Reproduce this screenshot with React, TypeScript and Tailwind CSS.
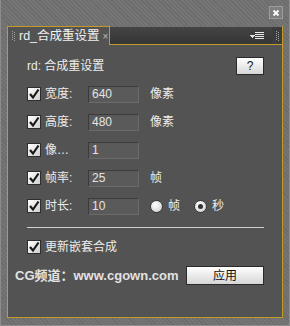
import React from "react";

const font = "font-['Liberation_Sans','Noto_Sans_CJK_SC',sans-serif]";

const Check: React.FC = () => (
  <div className="w-[14px] h-[14px] shrink-0 border border-[#2e2e2e] bg-[linear-gradient(135deg,#ffffff,#cfcfcf)] flex items-center justify-center">
    <svg width="12" height="12" viewBox="0 0 12 12">
      <path d="M2 6 L5 9.5 L10.5 1.5" fill="none" stroke="#1a1a1a" strokeWidth="2.2" />
    </svg>
  </div>
);

const Radio: React.FC<{ on?: boolean }> = ({ on }) => (
  <div className="w-[13px] h-[13px] rounded-full border border-[#3a3a3a] bg-[radial-gradient(circle_at_40%_35%,#ffffff,#c8c8c8)] flex items-center justify-center">
    {on && <div className="w-[5px] h-[5px] rounded-full bg-[#333]" />}
  </div>
);

const Field: React.FC<{ label: string; value: string; unit?: React.ReactNode }> = ({ label, value, unit }) => (
  <div className="h-[28px] flex items-center">
    <Check />
    <span className="ml-[4px] w-[43px] text-[12px] text-[#ececec]">{label}</span>
    <div className="w-[51px] h-[17px] border border-[#3b3b3b] border-r-[#6a6a6a] border-b-[#6a6a6a] bg-[#5a5a5a] pl-[3px] text-[12px] leading-[15px] text-[#e4e4e4]">
      {value}
    </div>
    <div className="ml-[11px] flex items-center text-[12px] text-[#ececec]">{unit}</div>
  </div>
);

const Grip: React.FC = () => (
  <svg width="3" height="10" viewBox="0 0 3 10">
    {[0, 2, 4, 6, 8].map((y) => (
      <React.Fragment key={y}>
        <rect x="0" y={y} width="1" height="1" fill="#a0a0a0" />
        <rect x="2" y={y + 1} width="1" height="1" fill="#a0a0a0" />
      </React.Fragment>
    ))}
  </svg>
);

const Btn: React.FC<{ children: React.ReactNode; w: string }> = ({ children, w }) => (
  <div className={`${w} h-full border border-[#2a2a2a] bg-[linear-gradient(180deg,#ffffff,#d6d6d6)] flex items-center justify-center text-[12px] text-[#111]`}>
    {children}
  </div>
);

export default function App() {
  return (
    <div className={`w-[290px] h-[326px] bg-[repeating-linear-gradient(45deg,#6b6b6b_0_1px,#757575_1px_3px)] ${font}`}>
      <div className="h-full border-x border-b border-[#8c8c8c] flex flex-col">
        {/* top strip */}
        <div className="h-[26px] flex justify-end items-start pt-[6px] pr-[6px]">
          <div className="w-[14px] h-[13px] border border-[#9c9c9c] bg-[#7e7e7e] flex items-center justify-center">
            <svg width="8" height="8" viewBox="0 0 8 8">
              <path d="M1.5 1.5 L6.5 6.5 M6.5 1.5 L1.5 6.5" stroke="#ffffff" strokeWidth="1.8" />
            </svg>
          </div>
        </div>

        {/* panel */}
        <div className="ml-[6px] w-[276px] h-[292px] flex flex-col">
          {/* tab bar */}
          <div className="h-[19px] flex">
            <div className="w-[103px] h-full border-l border-t border-r border-[#c29a2a] bg-[#535353] flex items-center pl-[4px]">
              <Grip />
              <span className="ml-[4px] text-[12.5px] text-[#f0f0f0]">rd_合成重设置</span>
              <span className="ml-[3px] text-[10px] text-[#bdbdbd]">×</span>
            </div>
            <div className="flex-1 h-full border-b border-r border-[#c29a2a] flex">
              <div className="flex-1 mt-[1px] bg-[linear-gradient(180deg,#444,#353535)] flex items-center justify-end pr-[8px]">
                <svg width="14" height="8" viewBox="0 0 14 8" shapeRendering="crispEdges">
                  <path d="M0 3 H5 L2.5 6 Z" fill="#e0e0e0" />
                  <rect x="5" y="0" width="9" height="1" fill="#e8e8e8" />
                  <rect x="5" y="2" width="9" height="1" fill="#e8e8e8" />
                  <rect x="5" y="4" width="9" height="1" fill="#e8e8e8" />
                  <rect x="5" y="6" width="9" height="1" fill="#e8e8e8" />
                </svg>
              </div>
              <div className="w-[10px] mt-[1px] bg-[#3c3c3c] flex items-center justify-center">
                <Grip />
              </div>
            </div>
          </div>

          {/* body */}
          <div className="flex-1 border-l border-r border-b border-[#c29a2a] bg-[#535353] pl-[19px] pr-[18px] pt-[12px] flex flex-col">
            <div className="h-[18px] flex items-center justify-between">
              <span className="text-[12px] text-[#ececec]">rd: 合成重设置</span>
              <Btn w="w-[28px]">?</Btn>
            </div>
            <div className="mt-[5px] flex flex-col">
              <Field label="宽度:" value="640" unit="像素" />
              <Field label="高度:" value="480" unit="像素" />
              <Field label="像…" value="1" />
              <Field label="帧率:" value="25" unit="帧" />
              <Field
                label="时长:"
                value="10"
                unit={
                  <>
                    <Radio />
                    <span className="ml-[5px]">帧</span>
                    <span className="ml-[14px]"><Radio on /></span>
                    <span className="ml-[5px]">秒</span>
                  </>
                }
              />
            </div>
            <div className="mt-[7px] h-[1px] bg-[#cfcfcf]" />
            <div className="mt-[5px] h-[28px] flex items-center">
              <Check />
              <span className="ml-[4px] text-[12px] text-[#ececec]">更新嵌套合成</span>
            </div>
            <div className="mt-[5px] h-[19px] -ml-[12px] flex items-center justify-between">
              <span className="text-[13px] font-bold text-[#e2e2e2]">CG频道：www.cgown.com</span>
              <Btn w="w-[78px]">应用</Btn>
            </div>
          </div>
        </div>
      </div>
    </div>
  );
}
